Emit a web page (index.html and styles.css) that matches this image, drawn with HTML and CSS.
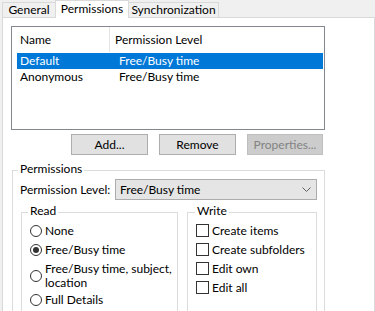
FILE: index.html
```html
<!DOCTYPE html>
<html lang="en">
<head>
    <meta charset="UTF-8">
    <title>Folder Properties</title>
    <link rel="stylesheet" href="styles.css">
</head>
<body>
    <div class="tabs">
        <div class="tab tab-general">General</div>
        <div class="tab tab-perm active">Permissions</div>
        <div class="tab tab-sync">Synchronization</div>
    </div>

    <div class="panel">
        <!-- who has access -->
        <div class="listbox">
            <div class="list-head">
                <div class="col col-name">Name</div>
                <div class="col col-level">Permission Level</div>
            </div>
            <div class="list-row selected">
                <div class="col col-name">Default</div>
                <div class="col col-level">Free/Busy time</div>
            </div>
            <div class="list-row">
                <div class="col col-name">Anonymous</div>
                <div class="col col-level">Free/Busy time</div>
            </div>
        </div>

        <div class="buttons">
            <button class="btn">Add...</button>
            <button class="btn">Remove</button>
            <button class="btn btn-props" disabled>Properties...</button>
        </div>

        <fieldset class="group group-perm">
            <legend>Permissions</legend>
            <div class="level-row">
                <span class="level-label">Permission Level:</span>
                <div class="combo">
                    <span>Free/Busy time</span>
                    <svg class="chev" width="9" height="5" viewBox="0 0 9 5">
                        <polyline points="0.5,0.5 4.5,4.5 8.5,0.5" fill="none" stroke="#606060" stroke-width="1"/>
                    </svg>
                </div>
            </div>

            <div class="sub-groups">
                <fieldset class="group group-read">
                    <legend>Read</legend>
                    <div class="opt radio-row">
                        <span class="radio"></span><span>None</span>
                    </div>
                    <div class="opt radio-row">
                        <span class="radio checked"></span><span>Free/Busy time</span>
                    </div>
                    <div class="opt radio-row multi">
                        <span class="radio"></span><span>Free/Busy time, subject,<br>location</span>
                    </div>
                    <div class="opt radio-row">
                        <span class="radio"></span><span>Full Details</span>
                    </div>
                </fieldset>

                <fieldset class="group group-write">
                    <legend>Write</legend>
                    <div class="opt check-row"><span class="check"></span><span>Create items</span></div>
                    <div class="opt check-row"><span class="check"></span><span>Create subfolders</span></div>
                    <div class="opt check-row"><span class="check"></span><span>Edit own</span></div>
                    <div class="opt check-row"><span class="check"></span><span>Edit all</span></div>
                </fieldset>
            </div>
        </fieldset>
    </div>
</body>
</html>
```

FILE: styles.css
```css
html, body {
    margin: 0;
    padding: 0;
}
body {
    width: 375px;
    height: 311px;
    overflow: hidden;
    background-color: #f0f0f0;
    font-family: Lato, "Noto Sans", sans-serif;
    font-size: 12px;
    color: #000;
}

/* tab strip */
.tabs {
    display: flex;
    align-items: flex-end;
    height: 17px;
    padding-left: 2px;
    position: relative;
    z-index: 1;
}
.tab {
    box-sizing: border-box;
    height: 15px;
    line-height: 14px;
    border: 1px solid #d9d9d9;
    border-bottom: none;
    background-color: #f0f0f0;
    text-align: center;
    white-space: nowrap;
}
.tab-general {
    width: 54px;
}
.tab-perm {
    width: 74px;
    margin-left: -1px;
}
.tab-sync {
    width: 91px;
    margin-left: -1px;
}
.tab.active {
    height: 18px;
    margin-bottom: -1px;
    line-height: 15px;
    background-color: #fff;
}

.panel {
    box-sizing: border-box;
    width: 373px;
    height: 300px;
    margin-left: 2px;
    padding-top: 8px;
    padding-left: 8px;
    background-color: #fff;
    border: 1px solid #d9d9d9;
    border-bottom: none;
}

/* list view */
.listbox {
    box-sizing: border-box;
    width: 314px;
    height: 104px;
    border: 1px solid #828790;
    background-color: #fff;
}
.list-head {
    display: flex;
    height: 25px;
    line-height: 25px;
}
.list-head .col-name {
    box-sizing: border-box;
    width: 98px;
    padding-left: 8px;
    border-right: 1px solid #e5e5e5;
}
.list-head .col-level {
    padding-left: 5px;
}
.list-row {
    display: flex;
    width: 306px;
    height: 16px;
    line-height: 16px;
    margin-left: 5px;
}
.list-head + .list-row {
    margin-top: 1px;
}
.list-row .col-name {
    width: 98px;
    padding-left: 3px;
}
.list-row .col-level {
    padding-left: 1px;
}
.list-row.selected {
    background-color: #0078d7;
    color: #fff;
}

/* buttons */
.buttons {
    display: flex;
    gap: 11px;
    margin-top: 4px;
    margin-left: 60px;
}
.btn {
    box-sizing: border-box;
    width: 77px;
    height: 21px;
    padding: 0;
    border: 1px solid #adadad;
    background-color: #e1e1e1;
    font-family: inherit;
    font-size: 12px;
    color: #000;
}
.btn-props {
    width: 76px;
    background-color: #cccccc;
    border-color: #bfbfbf;
    color: #838383;
}

/* group boxes */
.group {
    box-sizing: border-box;
    margin: 0;
    padding: 0;
    border: 1px solid #dcdcdc;
    min-width: 0;
}
.group legend {
    margin-left: -2px;
    padding: 0 2px 3px;
    line-height: 13px;
}
.group-perm {
    width: 313px;
    height: 200px;
    margin-top: 7px;
    margin-left: 1px;
    padding-left: 7px;
}
.level-row {
    display: flex;
    align-items: center;
    margin-top: 1px;
}
.level-label {
    width: 95px;
    white-space: nowrap;
}
.combo {
    box-sizing: border-box;
    display: flex;
    align-items: center;
    justify-content: space-between;
    width: 202px;
    height: 21px;
    padding: 0 5px 0 4px;
    border: 1px solid #acacac;
    background-color: #e5e5e5;
}
.sub-groups {
    display: flex;
    gap: 9px;
    margin-top: 4px;
    padding-left: 1px;
}
.group-read {
    width: 157px;
    height: 120px;
    padding-left: 8px;
}
.group-write {
    width: 130px;
    height: 120px;
    padding-left: 8px;
}
.group-write legend {
    margin-left: -1px;
}

.opt {
    display: flex;
    align-items: center;
    height: 19px;
    white-space: nowrap;
}
.opt:first-of-type {
    margin-top: 1px;
}
.radio-row.multi {
    height: 28px;
    line-height: 14px;
    margin-top: 3px;
}
.radio {
    box-sizing: border-box;
    flex: none;
    width: 12px;
    height: 12px;
    margin-right: 3px;
    border: 1px solid #333;
    border-radius: 50%;
    background-color: #fff;
    position: relative;
}
.radio.checked::after {
    content: "";
    position: absolute;
    left: 2px;
    top: 2px;
    width: 6px;
    height: 6px;
    border-radius: 50%;
    background-color: #333;
}
.check {
    box-sizing: border-box;
    flex: none;
    width: 13px;
    height: 13px;
    margin-right: 3px;
    border: 1px solid #333;
    background-color: #fff;
}
```
